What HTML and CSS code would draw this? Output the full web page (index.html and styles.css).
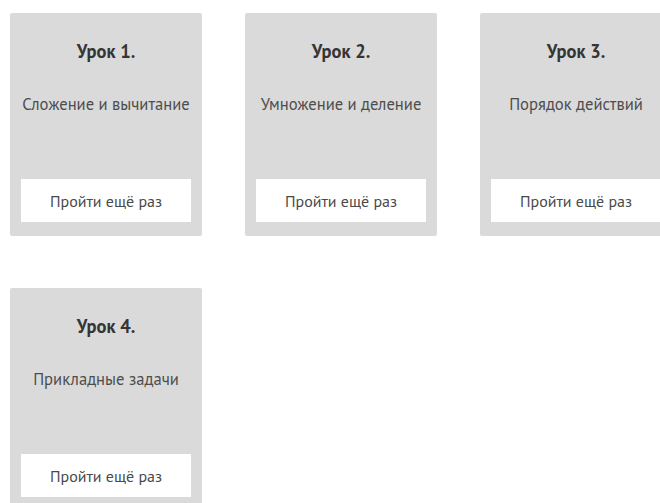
FILE: index.html
```html
<!DOCTYPE html>
<html lang="ru">
<head>
<meta charset="utf-8">
<title>Уроки</title>
<link rel="stylesheet" href="styles.css">
</head>
<body>
<main class="lessons">
  <section class="lesson">
    <h2 class="lesson-title">Урок 1.</h2>
    <p class="lesson-name">Сложение и вычитание</p>
    <a class="lesson-btn" href="#">Пройти ещё раз</a>
  </section>
  <section class="lesson">
    <h2 class="lesson-title">Урок 2.</h2>
    <p class="lesson-name">Умножение и деление</p>
    <a class="lesson-btn" href="#">Пройти ещё раз</a>
  </section>
  <section class="lesson">
    <h2 class="lesson-title">Урок 3.</h2>
    <p class="lesson-name">Порядок действий</p>
    <a class="lesson-btn" href="#">Пройти ещё раз</a>
  </section>
  <section class="lesson">
    <h2 class="lesson-title">Урок 4.</h2>
    <p class="lesson-name">Прикладные задачи</p>
    <a class="lesson-btn" href="#">Пройти ещё раз</a>
  </section>
</main>
</body>
</html>
```

FILE: styles.css
```css
html, body {
  margin: 0;
  padding: 0;
  background: #ffffff;
  overflow: hidden;
}

body {
  font-family: "PT Sans", "Liberation Sans", sans-serif;
  color: #333333;
}

.lessons {
  display: grid;
  grid-template-columns: repeat(3, 192px);
  column-gap: 43px;
  row-gap: 52px;
  padding: 13px 0 0 10px;
  width: max-content;
}

.lesson {
  display: flex;
  flex-direction: column;
  align-items: stretch;
  height: 223px;
  box-sizing: border-box;
  padding: 27px 11px 14px;
  background: #dadada;
  border-radius: 2px;
  text-align: center;
}

.lesson-title {
  margin: 0;
  font-size: 18.5px;
  line-height: 22px;
  font-weight: bold;
  color: #353535;
}

.lesson-name {
  margin: 32px -11px 0;
  font-size: 16.6px;
  line-height: 20px;
  font-weight: normal;
  color: #4d4d4d;
  white-space: nowrap;
}

.lesson-btn {
  margin-top: auto;
  display: flex;
  align-items: center;
  justify-content: center;
  height: 43px;
  background: #ffffff;
  color: #4a4a4a;
  font-size: 16px;
  text-decoration: none;
}
```
